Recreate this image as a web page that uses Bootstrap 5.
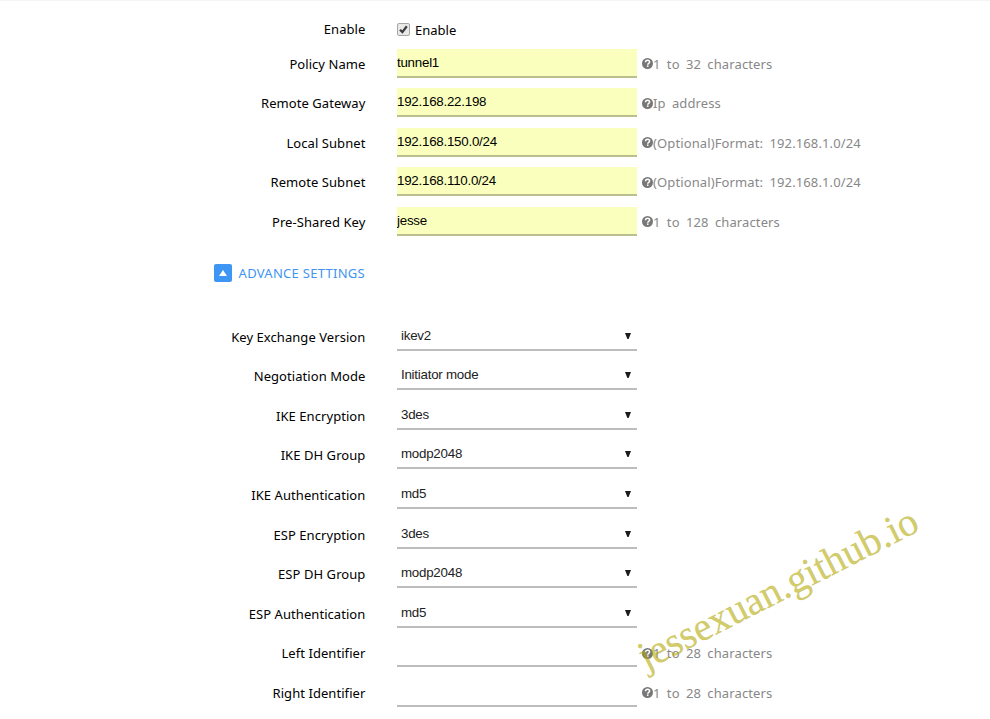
<!DOCTYPE html>
<html lang="en">
<head>
<meta charset="utf-8">
<meta name="viewport" content="width=device-width, initial-scale=1">
<title>Tunnel policy</title>
<link href="https://cdn.jsdelivr.net/npm/bootstrap@5.3.0/dist/css/bootstrap.min.css" rel="stylesheet">
<style>
body{font-family:"Noto Sans","Open Sans",sans-serif;font-size:13px;color:#000;background:#fff;height:719px}
.topline{height:1px;background:#f5f5f5}
.enable-row{height:47.6px;padding-top:13px}
.setting{height:39.6px}
.name{width:365.4px;line-height:31.5px;margin-right:31.6px;white-space:nowrap;letter-spacing:.06px}
.enable-row .name,.enable-text{line-height:31px}
.enable-text{padding-top:1px}
.tick{width:13px;height:13px;margin:9px 5px 0 0}
.field,.choice{width:240px;height:29px;border:0;border-bottom:2px solid #bdbdbd;border-radius:0;background:transparent;font:13.33px/27px "Liberation Sans",Arial,sans-serif;letter-spacing:-.24px;color:#000;padding:0}
.field{outline:0}
.filled{background:#faffbd;border-bottom-color:#bbbf8e}
.choice{color:#222;padding:1px 6px 0 4px;line-height:26px}
.arrow{width:6px;height:6px}
.hint{color:#888;margin-left:5px;line-height:31.4px;word-spacing:2.8px;letter-spacing:.12px;white-space:nowrap}
.q{width:11px;height:11px;margin-top:9.4px}
.advance{height:75px;padding-top:11px;color:#4095f0}
.advance a{width:365px;color:inherit;line-height:31px;letter-spacing:.28px}
.toggle{width:18px;height:18px;border-radius:2px;background:#3d96f3;margin-right:6.5px}
.stamp{left:0;top:0;pointer-events:none}
.stamp text{font-family:"Liberation Serif","Times New Roman",serif;font-size:40px;fill:#b5aa08;fill-opacity:.62;stroke:#b5aa08;stroke-opacity:.3;stroke-width:.5px}
</style>
<script src="https://cdn.jsdelivr.net/npm/bootstrap@5.3.0/dist/js/bootstrap.bundle.min.js"></script>
</head>
<body class="position-relative overflow-hidden">
<svg width="0" height="0" class="position-absolute" aria-hidden="true">
<symbol id="help" viewBox="0 0 11 11"><circle cx="5.5" cy="5.5" r="5.5" fill="#777"/><path d="M3.5 4.2C3.6 2.9 4.4 2.3 5.6 2.3S7.6 3 7.6 4.1C7.6 5.3 5.7 5.3 5.7 6.7" fill="none" stroke="#fff" stroke-width="1.5"/><path d="M4.9 7.4h1.6v1.5H4.9z" fill="#fff"/></symbol>
<symbol id="down" viewBox="0 0 6 6"><path d="M0 0h6L3.6 6H2.4z" fill="#1c1c1c"/></symbol>
</svg>
<div class="topline"></div>
<form>
<div class="enable-row d-flex"><label class="name text-end">Enable</label>
<svg class="tick" viewBox="0 0 13 13"><rect x=".5" y=".5" width="12" height="12" rx="1.5" fill="#e9e9e9" stroke="#a6a6a6"/><path d="M3 6.7l2.4 2.4L9.8 3.3" fill="none" stroke="#3c3c3c" stroke-width="2.3"/></svg><span class="enable-text">Enable</span></div>
<div class="setting d-flex"><label class="name text-end">Policy Name</label><input class="field filled" value="tunnel1"><span class="hint d-flex align-items-start"><svg class="q"><use href="#help"/></svg>1 to 32 characters</span></div>
<div class="setting d-flex"><label class="name text-end">Remote Gateway</label><input class="field filled" value="192.168.22.198"><span class="hint d-flex align-items-start"><svg class="q"><use href="#help"/></svg>Ip address</span></div>
<div class="setting d-flex"><label class="name text-end">Local Subnet</label><input class="field filled" value="192.168.150.0/24"><span class="hint d-flex align-items-start"><svg class="q"><use href="#help"/></svg>(Optional)Format: 192.168.1.0/24</span></div>
<div class="setting d-flex"><label class="name text-end">Remote Subnet</label><input class="field filled" value="192.168.110.0/24"><span class="hint d-flex align-items-start"><svg class="q"><use href="#help"/></svg>(Optional)Format: 192.168.1.0/24</span></div>
<div class="setting d-flex"><label class="name text-end">Pre-Shared Key</label><input class="field filled" value="jesse"><span class="hint d-flex align-items-start"><svg class="q"><use href="#help"/></svg>1 to 128 characters</span></div>
<div class="advance"><a class="d-flex justify-content-end align-items-center text-decoration-none"><span class="toggle d-flex align-items-center justify-content-center"><svg width="8" height="6"><path d="M4 0l4 6H0z" fill="#fff"/></svg></span><span class="adv-text">ADVANCE SETTINGS</span></a></div>
<div class="setting d-flex"><label class="name text-end">Key Exchange Version</label><div class="choice d-flex align-items-center justify-content-between"><span>ikev2</span><svg class="arrow"><use href="#down"/></svg></div></div>
<div class="setting d-flex"><label class="name text-end">Negotiation Mode</label><div class="choice d-flex align-items-center justify-content-between"><span>Initiator mode</span><svg class="arrow"><use href="#down"/></svg></div></div>
<div class="setting d-flex"><label class="name text-end">IKE Encryption</label><div class="choice d-flex align-items-center justify-content-between"><span>3des</span><svg class="arrow"><use href="#down"/></svg></div></div>
<div class="setting d-flex"><label class="name text-end">IKE DH Group</label><div class="choice d-flex align-items-center justify-content-between"><span>modp2048</span><svg class="arrow"><use href="#down"/></svg></div></div>
<div class="setting d-flex"><label class="name text-end">IKE Authentication</label><div class="choice d-flex align-items-center justify-content-between"><span>md5</span><svg class="arrow"><use href="#down"/></svg></div></div>
<div class="setting d-flex"><label class="name text-end">ESP Encryption</label><div class="choice d-flex align-items-center justify-content-between"><span>3des</span><svg class="arrow"><use href="#down"/></svg></div></div>
<div class="setting d-flex"><label class="name text-end">ESP DH Group</label><div class="choice d-flex align-items-center justify-content-between"><span>modp2048</span><svg class="arrow"><use href="#down"/></svg></div></div>
<div class="setting d-flex"><label class="name text-end">ESP Authentication</label><div class="choice d-flex align-items-center justify-content-between"><span>md5</span><svg class="arrow"><use href="#down"/></svg></div></div>
<div class="setting d-flex"><label class="name text-end">Left Identifier</label><input class="field"><span class="hint d-flex align-items-start"><svg class="q"><use href="#help"/></svg>1 to 28 characters</span></div>
<div class="setting d-flex"><label class="name text-end">Right Identifier</label><input class="field"><span class="hint d-flex align-items-start"><svg class="q"><use href="#help"/></svg>1 to 28 characters</span></div>
</form>
<svg class="stamp position-absolute" width="990" height="719"><text transform="translate(646.2 670.2) rotate(-27)">jessexuan.github.io</text></svg>
</body>
</html>
